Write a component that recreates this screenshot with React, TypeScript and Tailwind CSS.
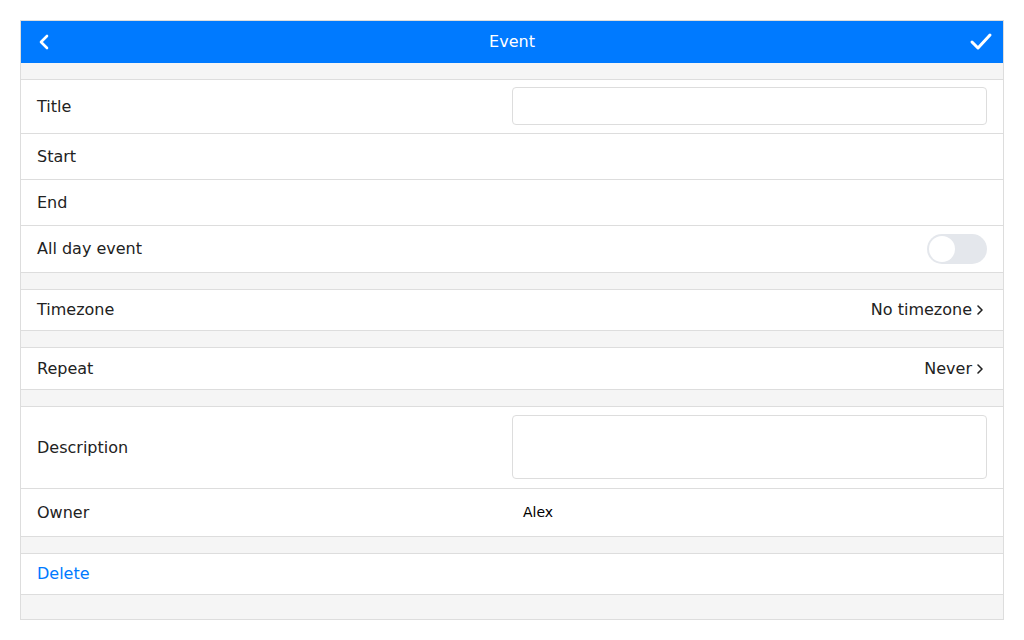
import React from "react";

const Chevron = () => (
  <svg width="8" height="12" viewBox="0 0 8 12" className="ml-[4px]">
    <path d="M2 2 L6 6 L2 10" fill="none" stroke="#222" strokeWidth="1.6" strokeLinecap="round" strokeLinejoin="round" />
  </svg>
);

const Spacer = ({ h = "h-[16px]" }: { h?: string }) => <div className={`${h} bg-[#f5f5f5]`} />;

export default function App() {
  return (
    <div className="p-[20px] bg-white" style={{ fontFamily: '"DejaVu Sans", sans-serif' }}>
      <div className="border border-[#dddddd] bg-[#f5f5f5] text-[16px] text-[#222]">
        <div className="relative h-[42px] bg-[#007aff] flex items-center justify-center text-white">
          <svg className="absolute left-[14px] top-[11px]" width="20" height="20" viewBox="0 0 20 20">
            <path d="M12 4 L6 10 L12 16" fill="none" stroke="white" strokeWidth="2.6" strokeLinecap="round" strokeLinejoin="round" />
          </svg>
          <span>Event</span>
          <svg className="absolute right-[10px] top-[9px]" width="24" height="24" viewBox="0 0 24 24">
            <path d="M3 12 L9 18 L21 5" fill="none" stroke="white" strokeWidth="3" strokeLinecap="round" strokeLinejoin="round" />
          </svg>
        </div>
        <Spacer />
        <div className="bg-white border-y border-[#dddddd]">
          <div className="h-[54px] px-[16px] grid grid-cols-2 items-center border-b border-[#dddddd]">
            <span>Title</span>
            <div className="h-[38px] mb-[2px] border border-[#dddddd] rounded-[4px] bg-white" />
          </div>
          <div className="h-[46px] px-[16px] flex items-center border-b border-[#dddddd]">Start</div>
          <div className="h-[46px] px-[16px] flex items-center border-b border-[#dddddd]">End</div>
          <div className="h-[46px] px-[16px] flex items-center justify-between">
            <span>All day event</span>
            <div className="w-[60px] h-[30px] rounded-full bg-[#e4e7ec] relative">
              <div className="absolute left-[2px] top-[2px] w-[26px] h-[26px] rounded-full bg-white" />
            </div>
          </div>
        </div>
        <Spacer />
        <div className="bg-white border-y border-[#dddddd]">
          <div className="h-[40px] pl-[16px] pr-[19px] flex items-center justify-between">
            <span>Timezone</span>
            <span className="flex items-center">No timezone<Chevron /></span>
          </div>
        </div>
        <Spacer />
        <div className="bg-white border-y border-[#dddddd]">
          <div className="h-[41px] pl-[16px] pr-[19px] flex items-center justify-between">
            <span>Repeat</span>
            <span className="flex items-center">Never<Chevron /></span>
          </div>
        </div>
        <Spacer />
        <div className="bg-white border-y border-[#dddddd]">
          <div className="h-[82px] px-[16px] grid grid-cols-2 items-center border-b border-[#dddddd]">
            <span>Description</span>
            <div className="h-[64px] mb-[2px] border border-[#dddddd] rounded-[4px] bg-white" />
          </div>
          <div className="h-[47px] px-[16px] grid grid-cols-2 items-center">
            <span>Owner</span>
            <span className="pl-[11px] text-[14px] text-black">Alex</span>
          </div>
        </div>
        <Spacer />
        <div className="bg-white border-y border-[#dddddd]">
          <div className="h-[40px] px-[16px] flex items-center text-[#007aff]">Delete</div>
        </div>
        <Spacer h="h-[24px]" />
      </div>
    </div>
  );
}
